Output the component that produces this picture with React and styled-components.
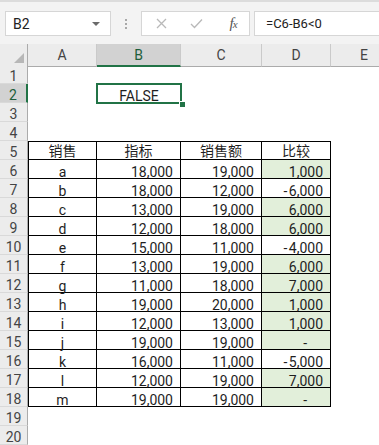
import React from 'react';
import styled, { createGlobalStyle } from 'styled-components';

const GlobalStyle = createGlobalStyle`
  html, body { margin: 0; padding: 0; background: #ffffff; overflow: hidden; }
  body { font-family: Roboto, "Noto Sans CJK SC", sans-serif; }
`;

const GREEN = '#217346';
const COLS = '28px 69px 84px 81px 69px 67px';

const Window = styled.div`
  width: 379px;
  height: 445px;
  overflow: hidden;
  display: flex;
  flex-direction: column;
`;

const TopBar = styled.div`
  height: 44px;
  box-sizing: border-box;
  border-top: 2px solid #dcdcdc;
  background: #f3f3f3;
  display: flex;
  align-items: flex-start;
  padding: 9px 0 0 5px;
  flex: none;
`;

const Box = styled.div`
  height: 25px;
  box-sizing: border-box;
  background: #ffffff;
  border: 1px solid #d6d6d6;
  display: flex;
  align-items: center;
`;

const NameBox = styled(Box)`
  width: 106px;
  padding: 0 10px 0 7px;
  justify-content: space-between;
  font-size: 14px;
  color: #222;
`;

const Caret = styled.span`
  width: 0;
  height: 0;
  border-left: 4px solid transparent;
  border-right: 4px solid transparent;
  border-top: 4px solid #6a6a6a;
`;

const Dots = styled.div`
  width: 30px;
  height: 25px;
  display: flex;
  flex-direction: column;
  align-items: center;
  justify-content: center;
  gap: 2px;
`;

const Dot = styled.span`
  width: 2px;
  height: 2px;
  background: #a8a8a8;
`;

const ActionBox = styled(Box)`
  width: 109px;
  padding: 0 0 0 13px;
`;

const ActionIcon = styled.span`
  width: ${p => p.$w}px;
  display: flex;
  justify-content: center;
  align-items: center;
`;

const Fx = styled.span`
  font-family: "Liberation Serif", serif;
  font-style: italic;
  font-size: 15px;
  color: #555;
  letter-spacing: -1px;
  & small { font-size: 11px; }
`;

const FormulaBox = styled(Box)`
  flex: 1;
  margin-left: 4px;
  margin-right: -4px;
  padding-left: 11px;
  font-size: 13px;
  color: #222;
`;

const Sheet = styled.div`
  flex: 1;
  overflow: hidden;
`;

const Row = styled.div`
  display: grid;
  grid-template-columns: ${COLS};
  height: ${p => (p.$header ? 21 : 19)}px;
  width: 398px;
`;

const Corner = styled.div`
  background: #ececec;
  box-sizing: border-box;
  border-right: 1px solid #ababab;
  border-bottom: 1px solid #ababab;
  display: flex;
  align-items: flex-end;
  justify-content: flex-end;
  padding: 0 3px 3px 0;
`;

const Triangle = styled.span`
  width: 0;
  height: 0;
  border-left: 10px solid transparent;
  border-bottom: 10px solid #b7b7b7;
`;

const ColHead = styled.div`
  background: ${p => (p.$sel ? '#d2d2d2' : '#ececec')};
  color: ${p => (p.$sel ? '#1d5e3a' : '#444')};
  box-sizing: border-box;
  border-right: 1px solid #cacaca;
  border-bottom: ${p => (p.$sel ? `2px solid ${GREEN}` : '1px solid #ababab')};
  font-size: 14px;
  text-align: center;
  line-height: 19px;
  padding-top: 2px;
`;

const RowHead = styled.div`
  background: ${p => (p.$sel ? '#d2d2d2' : '#ececec')};
  color: ${p => (p.$sel ? '#1d5e3a' : '#444')};
  box-sizing: border-box;
  border-right: ${p => (p.$sel ? `2px solid ${GREEN}` : '1px solid #ababab')};
  border-bottom: 1px solid #d9d9d9;
  font-size: 14px;
  text-align: center;
  line-height: 19px;
  padding-top: 2px;
  height: 19px;
`;

const Cell = styled.div`
  position: relative;
  box-sizing: border-box;
  height: 19px;
  font-size: 14px;
  line-height: 19px;
  color: #1f1f1f;
  white-space: nowrap;
  text-align: ${p => p.$align || 'left'};
  padding-top: ${p => (p.$head ? 0 : 3)}px;
  padding-right: ${p => p.$pr || 0}px;
  background: ${p => (p.$fill ? '#e2efda' : 'transparent')};
  border-right: ${p => (p.$boxed ? '1px solid #000' : 'none')};
  border-bottom: ${p => (p.$boxed ? '1px solid #000' : 'none')};
  border-top: ${p => (p.$top ? '1px solid #000' : 'none')};
  border-left: ${p => (p.$left ? '1px solid #000' : 'none')};
`;

const Minus = styled.span`
  margin-right: 1.5px;
`;

const Selection = styled.div`
  position: absolute;
  left: -1px;
  top: -1px;
  right: -1px;
  bottom: -1px;
  border: 2px solid ${GREEN};
`;

const FillHandle = styled.span`
  position: absolute;
  right: -5px;
  bottom: -5px;
  width: 5px;
  height: 5px;
  background: ${GREEN};
  border: 1px solid #fff;
`;

const data = [
  ['a', 18000, 19000],
  ['b', 18000, 12000],
  ['c', 13000, 19000],
  ['d', 12000, 18000],
  ['e', 15000, 11000],
  ['f', 13000, 19000],
  ['g', 11000, 18000],
  ['h', 19000, 20000],
  ['i', 12000, 13000],
  ['j', 19000, 19000],
  ['k', 16000, 11000],
  ['l', 12000, 19000],
  ['m', 19000, 19000],
];

function Num({ value }) {
  if (value === 0) return '-';
  if (value < 0) {
    return (
      <>
        <Minus>-</Minus>
        {Math.abs(value).toLocaleString('en-US')}
      </>
    );
  }
  return value.toLocaleString('en-US');
}

function SheetRow({ n, sel, children }) {
  return (
    <Row>
      <RowHead $sel={sel}>{n}</RowHead>
      {children || (
        <>
          <Cell /><Cell /><Cell /><Cell /><Cell />
        </>
      )}
    </Row>
  );
}

export default function App() {
  return (
    <Window>
      <GlobalStyle />
      <TopBar>
        <NameBox>
          <span>B2</span>
          <Caret />
        </NameBox>
        <Dots>
          <Dot /><Dot /><Dot />
        </Dots>
        <ActionBox>
          <ActionIcon $w={12}>
            <svg width="11" height="11" viewBox="0 0 11 11">
              <path d="M1 1 L10 10 M10 1 L1 10" stroke="#b9b9b9" strokeWidth="1.3" fill="none" />
            </svg>
          </ActionIcon>
          <ActionIcon $w={58}>
            <svg width="13" height="11" viewBox="0 0 13 11">
              <path d="M1 6 L4.5 9.5 L12 1.5" stroke="#b9b9b9" strokeWidth="1.3" fill="none" />
            </svg>
          </ActionIcon>
          <ActionIcon $w={16}>
            <Fx>f<small>x</small></Fx>
          </ActionIcon>
        </ActionBox>
        <FormulaBox>=C6-B6&lt;0</FormulaBox>
      </TopBar>
      <Sheet>
        <Row $header>
          <Corner><Triangle /></Corner>
          <ColHead>A</ColHead>
          <ColHead $sel>B</ColHead>
          <ColHead>C</ColHead>
          <ColHead>D</ColHead>
          <ColHead>E</ColHead>
        </Row>
        <SheetRow n={1} />
        <SheetRow n={2} sel>
          <Cell />
          <Cell $align="center">
            FALSE
            <Selection />
            <FillHandle />
          </Cell>
          <Cell /><Cell /><Cell />
        </SheetRow>
        <SheetRow n={3} />
        <SheetRow n={4} />
        <SheetRow n={5}>
          <Cell $boxed $top $left $head $align="center">销售</Cell>
          <Cell $boxed $top $head $align="center">指标</Cell>
          <Cell $boxed $top $head $align="center">销售额</Cell>
          <Cell $boxed $top $head $align="center">比较</Cell>
          <Cell />
        </SheetRow>
        {data.map(([name, target, sales], i) => {
          const diff = sales - target;
          return (
            <SheetRow key={name} n={i + 6}>
              <Cell $boxed $left $align="center">{name}</Cell>
              <Cell $boxed $align="right" $pr={7}><Num value={target} /></Cell>
              <Cell $boxed $align="right" $pr={7}><Num value={sales} /></Cell>
              <Cell $boxed $align="right" $pr={diff === 0 ? 23 : 7} $fill={diff >= 0}>
                <Num value={diff} />
              </Cell>
              <Cell />
            </SheetRow>
          );
        })}
        <SheetRow n={19} />
        <SheetRow n={20} />
      </Sheet>
    </Window>
  );
}
